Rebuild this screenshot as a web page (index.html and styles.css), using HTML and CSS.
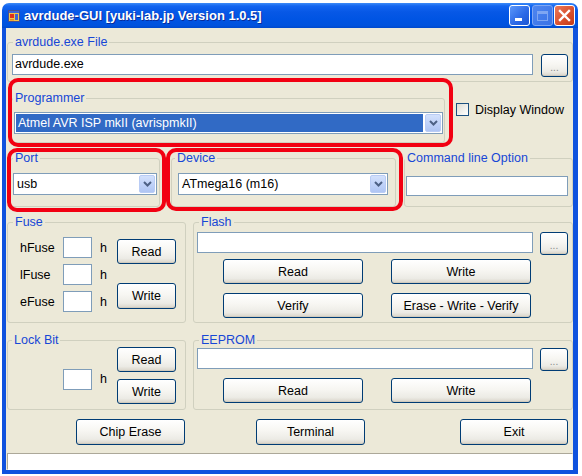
FILE: index.html
```html
<!DOCTYPE html>
<html>
<head>
<meta charset="utf-8">
<title>avrdude-GUI</title>
<link rel="stylesheet" href="styles.css">
</head>
<body>
<div class="window">
  <div class="titlebar">
    <svg class="app-icon" width="12" height="12" viewBox="0 0 12 12">
      <rect x="0.5" y="0.5" width="11" height="11" fill="#F3C649" stroke="#4B4F8F"/>
      <rect x="1" y="1" width="10" height="2" fill="#3F64D6"/>
      <rect x="2" y="4" width="4" height="4" fill="#E0301E"/>
      <rect x="7" y="4" width="3" height="6" fill="#3F64D6"/>
      <rect x="2" y="9" width="4" height="1.5" fill="#E98A1F"/>
    </svg>
    <span class="title">avrdude-GUI [yuki-lab.jp Version 1.0.5]</span>
    <div class="caption">
      <div class="cap cap-min"><span class="cap-min-bar"></span></div>
      <div class="cap cap-max"><span class="cap-max-box"></span></div>
      <div class="cap cap-close">
        <svg width="13" height="13" viewBox="0 0 13 13"><path d="M2 2 L11 11 M11 2 L2 11" stroke="#fff" stroke-width="2.4" stroke-linecap="square"/></svg>
      </div>
    </div>
  </div>

  <div class="body">
    <div class="row row-a">
      <fieldset class="grp grp-file">
        <legend class="lg lg-file">avrdude.exe File</legend>
        <div class="gi gi-file">
          <div class="tb tb-file">avrdude.exe</div>
          <button class="btn btn-dots">...</button>
        </div>
      </fieldset>
    </div>

    <div class="row row-b">
      <fieldset class="grp grp-prog">
        <legend class="lg lg-prog">Programmer</legend>
        <div class="gi gi-prog">
          <div class="combo combo-sel combo-prog">
            <span class="combo-text">Atmel AVR ISP mkII (avrispmkII)</span>
            <span class="combo-btn"><svg width="9" height="6" viewBox="0 0 9 6"><path d="M1 1 L4.5 4.5 L8 1" fill="none" stroke="#4D6185" stroke-width="2"/></svg></span>
          </div>
        </div>
      </fieldset>
      <div class="chk"><span class="chk-box"></span><span>Display Window</span></div>
    </div>

    <div class="row row-c">
      <fieldset class="grp grp-port">
        <legend class="lg lg-port">Port</legend>
        <div class="gi gi-port">
          <div class="combo combo-port">
            <span class="combo-text">usb</span>
            <span class="combo-btn"><svg width="9" height="6" viewBox="0 0 9 6"><path d="M1 1 L4.5 4.5 L8 1" fill="none" stroke="#4D6185" stroke-width="2"/></svg></span>
          </div>
        </div>
      </fieldset>
      <fieldset class="grp grp-dev">
        <legend class="lg lg-dev">Device</legend>
        <div class="gi gi-dev">
          <div class="combo combo-dev">
            <span class="combo-text">ATmega16 (m16)</span>
            <span class="combo-btn"><svg width="9" height="6" viewBox="0 0 9 6"><path d="M1 1 L4.5 4.5 L8 1" fill="none" stroke="#4D6185" stroke-width="2"/></svg></span>
          </div>
        </div>
      </fieldset>
      <fieldset class="grp grp-cmd">
        <legend class="lg lg-cmd">Command line Option</legend>
        <div class="gi gi-cmd">
          <div class="tb tb-cmd"></div>
        </div>
      </fieldset>
    </div>

    <div class="row row-d">
      <fieldset class="grp grp-fuse">
        <legend class="lg lg-fuse">Fuse</legend>
        <div class="gi gi-fuse">
          <div class="fuse-grid">
            <span class="fl">hFuse</span><div class="tb tb-small"></div><span class="fh">h</span>
            <span class="fl">lFuse</span><div class="tb tb-small"></div><span class="fh">h</span>
            <span class="fl">eFuse</span><div class="tb tb-small"></div><span class="fh">h</span>
          </div>
          <div class="fuse-btns">
            <button class="btn btn-small">Read</button>
            <button class="btn btn-small btn-fwrite">Write</button>
          </div>
        </div>
      </fieldset>
      <fieldset class="grp grp-flash">
        <legend class="lg lg-flash">Flash</legend>
        <div class="gi gi-flash">
          <div class="file-row">
            <div class="tb tb-wide"></div>
            <button class="btn btn-dots">...</button>
          </div>
          <div class="btn-grid btn-grid-flash">
            <button class="btn btn-big">Read</button>
            <button class="btn btn-big">Write</button>
            <button class="btn btn-big">Verify</button>
            <button class="btn btn-big">Erase - Write - Verify</button>
          </div>
        </div>
      </fieldset>
    </div>

    <div class="row row-e">
      <fieldset class="grp grp-lock">
        <legend class="lg lg-lock">Lock Bit</legend>
        <div class="gi gi-lock">
          <div class="tb tb-small tb-lock"></div>
          <span class="fh lock-h">h</span>
          <div class="lock-btns">
            <button class="btn btn-small">Read</button>
            <button class="btn btn-small">Write</button>
          </div>
        </div>
      </fieldset>
      <fieldset class="grp grp-eep">
        <legend class="lg lg-eep">EEPROM</legend>
        <div class="gi gi-eep">
          <div class="file-row">
            <div class="tb tb-wide"></div>
            <button class="btn btn-dots">...</button>
          </div>
          <div class="btn-grid btn-grid-eep">
            <button class="btn btn-big">Read</button>
            <button class="btn btn-big">Write</button>
          </div>
        </div>
      </fieldset>
    </div>

    <div class="row row-f">
      <button class="btn btn-bottom btn-chip">Chip Erase</button>
      <button class="btn btn-bottom btn-term">Terminal</button>
      <button class="btn btn-bottom btn-exit">Exit</button>
    </div>

    <div class="status"></div>
  </div>

  <div class="mark mark-prog"></div>
  <div class="mark mark-port"></div>
  <div class="mark mark-dev"></div>
</div>
</body>
</html>
```

FILE: styles.css
```css
* { box-sizing: border-box; }

body {
  margin: 0;
  background: #ffffff;
  font-family: "Liberation Sans", Arial, sans-serif;
  font-size: 12.5px;
  color: #000;
}

.window {
  position: relative;
  margin: 3px 0 0 2px;
  width: 576px;
  height: 471px;
  display: flex;
  flex-direction: column;
}

/* ---------- title bar ---------- */
.titlebar {
  height: 25px;
  flex: none;
  display: flex;
  align-items: center;
  padding: 0 3px 0 6px;
  border-radius: 7px 7px 0 0;
  background: linear-gradient(to bottom, #3D8BF7 0%, #1466F0 12%, #0758E6 35%, #0054E3 65%, #0052DD 90%, #0049CC 100%);
}

.app-icon { flex: none; }

.title {
  margin-left: 4px;
  color: #fff;
  font-weight: bold;
  font-size: 13px;
  text-shadow: 1px 1px 0 #0A2C9A;
  white-space: nowrap;
}

.caption {
  margin-left: auto;
  display: flex;
  align-items: center;
}

.cap {
  width: 21px;
  height: 21px;
  border: 1px solid #fff;
  border-radius: 3px;
  display: flex;
  align-items: center;
  justify-content: center;
  position: relative;
}

.cap-min {
  background: linear-gradient(135deg, #5B97FA 0%, #2A67E6 60%, #1E56D2 100%);
}

.cap-min-bar {
  position: absolute;
  left: 5px;
  top: 12px;
  width: 7px;
  height: 3px;
  background: #fff;
}

.cap-max {
  margin-left: 2px;
  border-color: #7FA6F2;
  background: linear-gradient(135deg, #4E86F0 0%, #3A72E6 100%);
}

.cap-max-box {
  width: 11px;
  height: 10px;
  border: 1px solid #7FA6F2;
  border-top-width: 3px;
}

.cap-close {
  margin-left: 1px;
  background: linear-gradient(135deg, #EC7A5B 0%, #D9512F 55%, #C23A18 100%);
}

/* ---------- client ---------- */
.body {
  flex: 1;
  background: #ECE9D8;
  border-style: solid;
  border-color: #0F52DE;
  border-width: 0 5px 4px 4px;
  display: flex;
  flex-direction: column;
}

.row { display: flex; align-items: flex-start; }

.row-a { margin-top: 7px; }
.row-b { margin-top: 9px; }
.row-c { margin-top: 8px; }
.row-d { margin-top: 8px; }
.row-e { margin-top: 10px; }
.row-f { margin-top: 9px; }

/* ---------- group boxes ---------- */
.grp {
  margin: 0;
  padding: 0;
  border: 1px solid #D0D0BF;
  border-radius: 3px;
  min-width: 0;
}

.lg {
  padding: 0 2px;
  line-height: 14px;
  font-size: 12.5px;
  color: #1747D6;
}

.lg-file { margin-left: 5px; }
.lg-prog { margin-left: 1px; }
.lg-port { margin-left: 2px; }
.lg-dev { margin-left: 3px; }
.lg-cmd { margin-left: 0; }
.lg-fuse, .lg-flash, .lg-eep { margin-left: 5px; }
.lg-lock { margin-left: 4px; }

.grp-file  { margin-left: 1px;  width: 566px; height: 47px; }
.grp-prog  { margin-left: 5px;  width: 434px; height: 52px; }
.grp-port  { margin-left: 4px;  width: 150px; height: 56px; }
.grp-dev   { margin-left: 11px; width: 225px; height: 56px; }
.grp-cmd   { margin-left: 8px;  width: 169px; height: 56px; }
.grp-fuse  { margin-left: 1px;  width: 179px; height: 108px; }
.grp-flash { margin-left: 7px;  width: 380px; height: 108px; }
.grp-lock  { margin-left: 1px;  width: 179px; height: 77px; }
.grp-eep   { margin-left: 7px;  width: 380px; height: 77px; }

.gi-file  { display: flex; align-items: flex-start; padding: 5px 0 0 4px; }
.gi-prog  { padding: 7px 0 0 2px; }
.gi-port  { padding: 8px 0 0 2px; }
.gi-dev   { padding: 8px 0 0 6px; }
.gi-cmd   { padding: 11px 0 0 1px; }
.gi-fuse  { display: flex; align-items: flex-start; padding: 8px 0 0 12px; }
.gi-flash { padding: 3px 0 0 3px; }
.gi-lock  { display: flex; align-items: flex-start; padding: 0 0 0 55px; }
.gi-eep   { padding: 1px 0 0 3px; }

/* ---------- text boxes ---------- */
.tb {
  height: 21px;
  border: 1px solid #7F9DB9;
  background: #fff;
  padding-left: 2px;
  line-height: 19px;
  white-space: nowrap;
}

.tb-file { width: 521px; }
.tb-cmd  { width: 162px; height: 20px; }
.tb-wide { width: 336px; }
.tb-small { width: 29px; }

/* ---------- combo boxes ---------- */
.combo {
  display: flex;
  height: 22px;
  border: 1px solid #7F9DB9;
  background: #fff;
  padding: 1px;
}

.combo-text {
  flex: 1;
  padding-left: 2px;
  line-height: 18px;
  white-space: nowrap;
  overflow: hidden;
}

.combo-sel .combo-text {
  background: #316AC5;
  color: #fff;
  margin-right: 2px;
}

.combo-btn {
  flex: none;
  width: 16px;
  height: 18px;
  border: 1px solid #B9CCF5;
  border-radius: 2px;
  background: linear-gradient(to bottom, #D3E1FC 0%, #BDD0F8 60%, #AFC5F3 100%);
  display: flex;
  align-items: center;
  justify-content: center;
}

.combo-prog { width: 429px; }
.combo-port { width: 144px; }
.combo-dev  { width: 210px; }

/* ---------- checkbox ---------- */
.chk {
  display: flex;
  align-items: center;
  margin: 12px 0 0 11px;
  height: 13px;
  white-space: nowrap;
}

.chk-box {
  width: 13px;
  height: 13px;
  border: 1px solid #1C5180;
  background: linear-gradient(135deg, #DCDCD4 0%, #F6F6F3 70%, #fff 100%);
  margin-right: 6px;
}

/* ---------- buttons ---------- */
.btn {
  font-family: "Liberation Sans", Arial, sans-serif;
  font-size: 12.5px;
  color: #000;
  padding: 0;
  margin: 0;
  border: 1px solid #003C74;
  border-radius: 3px;
  background: linear-gradient(to bottom, #FFFFFF 0%, #F7F6F2 45%, #ECEBE5 80%, #D8D3C8 100%);
  box-shadow: inset 0 -1px 0 #D0CBBE;
  height: 25px;
  white-space: nowrap;
}

.btn-dots {
  width: 28px;
  height: 23px;
  margin-left: 7px;
  color: #8A8A8A;
  font-size: 10px;
  padding-top: 4px;
}

.gi-file .btn-dots { margin-left: 8px; width: 27px; }

.btn-small { width: 59px; }
.btn-fwrite { height: 26px; }

.fuse-grid {
  display: grid;
  grid-template-columns: 35px 29px 7px;
  grid-auto-rows: 21px;
  column-gap: 8px;
  row-gap: 6px;
  align-items: center;
}

.fuse-btns {
  display: flex;
  flex-direction: column;
  gap: 19px;
  margin: 2px 0 0 10px;
}

.file-row { display: flex; align-items: flex-start; }

.btn-grid {
  display: grid;
  grid-template-columns: 140px 140px;
  column-gap: 28px;
  row-gap: 9px;
  margin-left: 26px;
}

.btn-grid-flash { margin-top: 4px; }
.btn-grid-eep { margin-top: 7px; }

.btn-big { width: 140px; }

.tb-lock { margin-top: 22px; }
.lock-h { margin: 25px 0 0 8px; width: 7px; }

.lock-btns {
  display: flex;
  flex-direction: column;
  gap: 7px;
  margin-left: 10px;
}

.btn-bottom { height: 26px; }
.btn-chip { margin-left: 70px; width: 109px; }
.btn-term { margin-left: 71px; width: 109px; }
.btn-exit { margin-left: 95px; width: 108px; }

/* ---------- status bar ---------- */
.status {
  margin: 8px 0 0 1px;
  width: 566px;
  height: 17px;
  background: #fff;
  border: 1px solid;
  border-color: #ACA899 #F4F3EE #fff #ACA899;
}

/* ---------- red annotation marks ---------- */
.mark {
  position: absolute;
  border: 4px solid #F20012;
  border-radius: 10px;
}

.mark-prog { left: 6px;   top: 75px;  width: 445px; height: 69px; }
.mark-port { left: 5px;   top: 145px; width: 159px; height: 64px; }
.mark-dev  { left: 164px; top: 145px; width: 237px; height: 63px; }
```
